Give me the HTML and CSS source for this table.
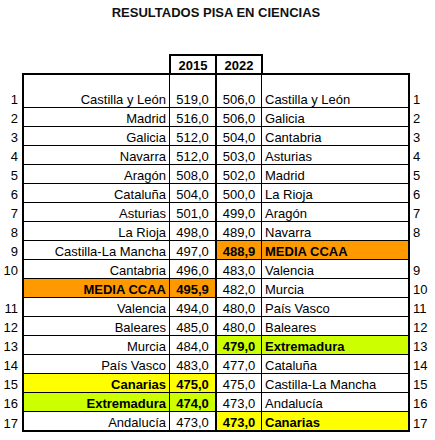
FILE: index.html
```html
<!DOCTYPE html>
<html lang="es">
<head>
<meta charset="utf-8">
<title>Resultados PISA en Ciencias</title>
<link rel="stylesheet" href="styles.css">
</head>
<body>
<div class="page">
  <h1 class="title">RESULTADOS PISA EN CIENCIAS</h1>
  <div class="sheet">
    <div class="row head">
      <div class="c"></div><div class="c"></div>
      <div class="c hd y1">2015</div><div class="c hd y2">2022</div>
      <div class="c"></div><div class="c"></div>
    </div>
    <div class="row first">
      <div class="c n">1</div><div class="c nm">Castilla y León</div><div class="c v15">519,0</div><div class="c v22">506,0</div><div class="c nm2">Castilla y León</div><div class="c nr">1</div>
    </div>
    <div class="row">
      <div class="c n">2</div><div class="c nm">Madrid</div><div class="c v15">516,0</div><div class="c v22">506,0</div><div class="c nm2">Galicia</div><div class="c nr">2</div>
    </div>
    <div class="row">
      <div class="c n">3</div><div class="c nm">Galicia</div><div class="c v15">512,0</div><div class="c v22">504,0</div><div class="c nm2">Cantabria</div><div class="c nr">3</div>
    </div>
    <div class="row">
      <div class="c n">4</div><div class="c nm">Navarra</div><div class="c v15">512,0</div><div class="c v22">503,0</div><div class="c nm2">Asturias</div><div class="c nr">4</div>
    </div>
    <div class="row">
      <div class="c n">5</div><div class="c nm">Aragón</div><div class="c v15">508,0</div><div class="c v22">502,0</div><div class="c nm2">Madrid</div><div class="c nr">5</div>
    </div>
    <div class="row">
      <div class="c n">6</div><div class="c nm">Cataluña</div><div class="c v15">504,0</div><div class="c v22">500,0</div><div class="c nm2">La Rioja</div><div class="c nr">6</div>
    </div>
    <div class="row">
      <div class="c n">7</div><div class="c nm">Asturias</div><div class="c v15">501,0</div><div class="c v22">499,0</div><div class="c nm2">Aragón</div><div class="c nr">7</div>
    </div>
    <div class="row">
      <div class="c n">8</div><div class="c nm">La Rioja</div><div class="c v15">498,0</div><div class="c v22">489,0</div><div class="c nm2">Navarra</div><div class="c nr">8</div>
    </div>
    <div class="row">
      <div class="c n">9</div><div class="c nm">Castilla-La Mancha</div><div class="c v15">497,0</div><div class="c v22 hl-orange">488,9</div><div class="c nm2 hl-orange">MEDIA CCAA</div><div class="c nr"></div>
    </div>
    <div class="row">
      <div class="c n">10</div><div class="c nm">Cantabria</div><div class="c v15">496,0</div><div class="c v22">483,0</div><div class="c nm2">Valencia</div><div class="c nr">9</div>
    </div>
    <div class="row">
      <div class="c n"></div><div class="c nm hl-orange">MEDIA CCAA</div><div class="c v15 hl-orange">495,9</div><div class="c v22">482,0</div><div class="c nm2">Murcia</div><div class="c nr">10</div>
    </div>
    <div class="row">
      <div class="c n">11</div><div class="c nm">Valencia</div><div class="c v15">494,0</div><div class="c v22">480,0</div><div class="c nm2">País Vasco</div><div class="c nr">11</div>
    </div>
    <div class="row">
      <div class="c n">12</div><div class="c nm">Baleares</div><div class="c v15">485,0</div><div class="c v22">480,0</div><div class="c nm2">Baleares</div><div class="c nr">12</div>
    </div>
    <div class="row">
      <div class="c n">13</div><div class="c nm">Murcia</div><div class="c v15">484,0</div><div class="c v22 hl-green">479,0</div><div class="c nm2 hl-green">Extremadura</div><div class="c nr">13</div>
    </div>
    <div class="row">
      <div class="c n">14</div><div class="c nm">País Vasco</div><div class="c v15">483,0</div><div class="c v22">477,0</div><div class="c nm2">Cataluña</div><div class="c nr">14</div>
    </div>
    <div class="row">
      <div class="c n">15</div><div class="c nm hl-yellow">Canarias</div><div class="c v15 hl-yellow">475,0</div><div class="c v22">475,0</div><div class="c nm2">Castilla-La Mancha</div><div class="c nr">15</div>
    </div>
    <div class="row">
      <div class="c n">16</div><div class="c nm hl-green">Extremadura</div><div class="c v15 hl-green">474,0</div><div class="c v22">473,0</div><div class="c nm2">Andalucía</div><div class="c nr">16</div>
    </div>
    <div class="row last">
      <div class="c n">17</div><div class="c nm">Andalucía</div><div class="c v15">473,0</div><div class="c v22 hl-yellow">473,0</div><div class="c nm2 hl-yellow">Canarias</div><div class="c nr">17</div>
    </div>
  </div>
</div>
</body>
</html>
```

FILE: styles.css
```css
* { box-sizing: border-box; }

html, body {
  margin: 0;
  padding: 0;
  background: #ffffff;
}

.page {
  width: 435px;
  height: 440px;
  font-family: "Liberation Sans", Arial, sans-serif;
  font-size: 13px;
  line-height: 15px;
  color: #000000;
}

.title {
  margin: 0;
  padding-top: 5px;
  height: 54px;
  width: 432px;
  text-align: center;
  font-size: 13px;
  line-height: 15px;
  font-weight: bold;
  color: #111111;
}

.sheet {
  display: flex;
  flex-direction: column;
}

.row {
  display: grid;
  grid-template-columns: 22px 148px 47px 45px 148px 1fr;
  height: 19px;
}

.row.first { height: 35px; }
.row.last { height: 20px; }

.c {
  display: flex;
  align-items: flex-end;
  white-space: nowrap;
  border-bottom: 1px solid transparent;
}

/* header box */
.head .c { border-bottom: 0; }
.hd {
  justify-content: center;
  font-weight: bold;
  border-top: 2px solid #000;
  border-right: 2px solid #000;
}
.hd.y1 {
  margin-left: -1px;
  border-left: 2px solid #000;
}
.hd.y2 {
  margin-right: -1px;
}

/* outside rank numbers */
.n {
  justify-content: flex-end;
  padding-right: 4px;
}
.nr {
  justify-content: flex-start;
  padding-left: 3px;
}

/* table cells */
.nm, .v15, .v22, .nm2 {
  border-bottom: 1px solid #000;
}
.nm {
  justify-content: flex-end;
  padding-right: 3px;
  border-left: 2px solid #000;
  border-right: 1px solid #000;
}
.v15 {
  justify-content: center;
  border-right: 2px solid #000;
}
.v22 {
  justify-content: center;
  border-right: 1px solid #000;
}
.nm2 {
  justify-content: flex-start;
  padding-left: 3px;
  border-right: 2px solid #000;
}

.first .nm, .first .v15, .first .v22, .first .nm2 {
  border-top: 2px solid #000;
}
.last .nm, .last .v15, .last .v22, .last .nm2 {
  border-bottom: 2px solid #000;
}

/* highlights */
.hl-orange { background: #ff9900; font-weight: bold; }
.hl-yellow { background: #ffff00; font-weight: bold; }
.hl-green { background: #ccff00; font-weight: bold; }
```
